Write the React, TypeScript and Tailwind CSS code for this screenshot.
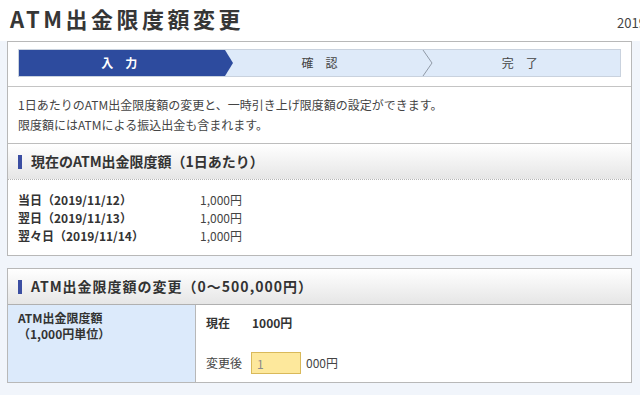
const rows = [
  { label: "当日（2019/11/12）", amount: "1,000円" },
  { label: "翌日（2019/11/13）", amount: "1,000円" },
  { label: "翌々日（2019/11/14）", amount: "1,000円" },
];

function SectionHeader({ title, dotted, wide }: { title: string; dotted?: boolean; wide?: boolean }) {
  return (
    <div
      className={
        "flex h-[36px] items-center gap-[9px] bg-gradient-to-b from-white to-[#e6e6e6] pl-[10px] " +
        (dotted ? "border-b border-dotted border-[#b5b5b5]" : "border-b border-[#b0b0b0]")
      }
    >
      <span className="h-[14px] w-[4px] bg-[#3b4ea2]" />
      <span className={"text-[14px] font-bold text-[#333] " + (wide ? "tracking-[1px]" : "")}>{title}</span>
    </div>
  );
}

function Steps() {
  return (
    <div className="grid h-[28px] grid-cols-3 border border-[#c9d2de] bg-[#deeaf9] text-[12px]">
      <div className="relative flex items-center justify-center bg-[#2d4b9e] font-bold text-white">
        入　力
        <svg className="absolute left-full top-0 z-10" width="15" height="26" viewBox="0 0 15 26">
          <polygon points="0,0 6,0 14,13 6,26 0,26" fill="#2d4b9e" />
        </svg>
      </div>
      <div className="relative flex items-center justify-center text-[#444]">
        確　認
        <svg className="absolute left-full top-0" width="14" height="26" viewBox="0 0 14 26">
          <polyline points="3,0 12,13 3,26" fill="none" stroke="#8f99a6" strokeWidth="1" />
        </svg>
      </div>
      <div className="flex items-center justify-center text-[#444]">完　了</div>
    </div>
  );
}

export default function App() {
  return (
    <div className="w-[640px] overflow-hidden bg-[#f1f5fb] font-['Noto_Sans_CJK_JP','Noto_Sans',sans-serif] text-[#333]">
      <div className="flex h-[41px] bg-white">
        <h1 className="w-[617px] shrink-0 pl-[10px] pt-[6px] text-[22px] font-bold leading-[24px] tracking-[3.5px] text-[#363636]">
          ATM出金限度額変更
        </h1>
        <span className="mt-[16px] shrink-0 whitespace-nowrap text-[13px] leading-[14px] text-[#444]">
          2019/11/12
        </span>
      </div>

      <div className="pl-[7px] pr-[8px] pb-[12px]">
        <div className="border border-[#b8b8b8] bg-white">
          <div className="border-b border-[#c4c4c4] pl-[10px] pr-[10px] pt-[7px] pb-[9px]">
            <Steps />
          </div>
          <div className="px-[10px] py-[8px] text-[12px] leading-[20px] text-[#444]">
            <p>1日あたりのATM出金限度額の変更と、一時引き上げ限度額の設定ができます。</p>
            <p>限度額にはATMによる振込出金も含まれます。</p>
          </div>
          <div className="border-t border-[#bdbdbd]">
            <SectionHeader title="現在のATM出金限度額（1日あたり）" dotted />
          </div>
          <div className="pl-[10px] pt-[11px] pb-[10px] text-[12px] leading-[18px]">
            {rows.map((row) => (
              <div key={row.label} className="grid grid-cols-[182px_1fr]">
                <span className="font-bold">{row.label}</span>
                <span className="text-[#444]">{row.amount}</span>
              </div>
            ))}
          </div>
        </div>

        <div className="mt-[12px] border border-[#b8b8b8] bg-white">
          <SectionHeader title="ATM出金限度額の変更（0〜500,000円）" wide />
          <div className="grid grid-cols-[188px_1fr] text-[12px]">
            <div className="border-r border-[#b8b8b8] bg-[#dceafb] pl-[10px] pt-[5px] font-bold leading-[16px]">
              <p>ATM出金限度額</p>
              <p>（1,000円単位）</p>
            </div>
            <div className="pl-[10px] pt-[9px] pb-[8px]">
              <div className="flex h-[18px] items-center font-bold">
                <span className="w-[46px]">現在</span>
                <span>1000円</span>
              </div>
              <div className="mt-[20px] flex items-center">
                <span className="w-[45px] text-[#444]">変更後</span>
                <input
                  defaultValue="1"
                  className="h-[22px] w-[50px] border border-[#d9b95a] bg-[#fde89c] px-[5px] text-[12px] text-[#8a8a8a] outline-none"
                />
                <span className="ml-[5px] text-[#444]">000円</span>
              </div>
            </div>
          </div>
        </div>
      </div>
    </div>
  );
}
